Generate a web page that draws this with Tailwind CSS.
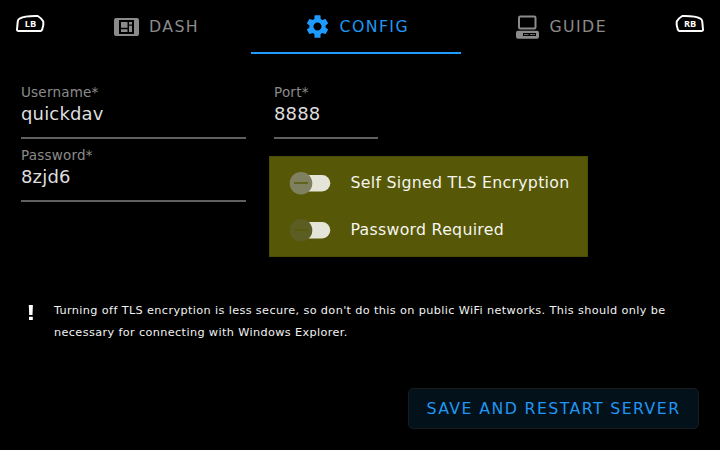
<!DOCTYPE html>
<html lang="en">
<head>
<meta charset="utf-8">
<title>Config</title>
<script src="https://cdn.jsdelivr.net/npm/@tailwindcss/browser@4"></script>
</head>
<body class="bg-black">
<div class="w-[720px] h-[450px] overflow-hidden bg-black text-white font-['DejaVu_Sans',sans-serif] flex flex-col">
  <header class="flex h-[54px] shrink-0 pl-[15px]">
    <svg class="w-[30px] h-[20px] mt-[14px] mr-[-4px] shrink-0" viewBox="0 0 30 20" fill="none" stroke="#fff" stroke-width="2" stroke-linejoin="round"><path d="M2.8 7.2Q3 5.2 5 4.4Q9.5 1.7 22.8 2Q26 3.8 28.3 7.6Q28.9 10.5 27.2 15.5Q26.5 17 25.5 17H3.5Q1.9 17 2 15.5Z"/><text x="9.7" y="12.8" fill="#fff" stroke="none" font-family="Open Sans, sans-serif" font-weight="700" font-size="9.4" textLength="11.4" lengthAdjust="spacingAndGlyphs">LB</text></svg>
    <nav class="grid grid-cols-[210px_210px_210px] text-[15.75px] leading-[20px] tracking-[0.0893em]">
      <div class="flex items-center pl-[73px] text-[#8b8b8b]">
        <svg class="w-[25px] h-[18px] mr-[10px]" viewBox="0 0 25 18"><path fill="#8b8b8b" fill-rule="evenodd" d="M2 0H23Q25 0 25 2V16Q25 18 23 18H2Q0 18 0 16V2Q0 0 2 0ZM5 2V16H20V2Z"/><path fill="#8b8b8b" d="M7 4H13.5V9.7H7ZM15 4H18V6.4H15ZM15 7.7H18V14H15ZM7 11.3H13.5V14H7Z"/></svg>
        <span>DASH</span>
      </div>
      <div class="flex items-center pt-[2px] pl-[53px] text-[#2196f3] border-b-2 border-[#1e9bff]">
        <svg class="w-[27px] h-[27px] mr-[8.5px] mb-[1px]" viewBox="0 0 24 24" fill="#1e9bff"><path d="M19.14 12.94c.04-.3.06-.61.06-.94 0-.32-.02-.64-.07-.94l2.03-1.58c.18-.14.23-.41.12-.61l-1.92-3.32c-.12-.22-.37-.29-.59-.22l-2.39.96c-.5-.38-1.03-.7-1.62-.94L14.7 2.3c-.04-.24-.24-.41-.48-.41h-4.44c-.24 0-.43.17-.47.41L9.25 5.35c-.59.24-1.13.57-1.62.94l-2.39-.96c-.22-.08-.47 0-.59.22L2.74 8.87c-.12.21-.08.47.12.61l2.03 1.58c-.05.3-.09.63-.09.94s.02.64.07.94l-2.03 1.58c-.18.14-.23.41-.12.61l1.92 3.32c.12.22.37.29.59.22l2.39-.96c.5.38 1.03.7 1.62.94l.06 3.05c.05.24.24.41.48.41h4.44c.24 0 .44-.17.47-.41l.06-3.05c.59-.24 1.13-.56 1.62-.94l2.39.96c.22.08.47 0 .59-.22l1.92-3.32c.12-.22.07-.47-.12-.61zM12 15.6c-1.98 0-3.6-1.62-3.6-3.6s1.62-3.6 3.6-3.6 3.6 1.62 3.6 3.6-1.62 3.6-3.6 3.6z"/></svg>
        <span>CONFIG</span>
      </div>
      <div class="flex items-center pl-[55px] text-[#8b8b8b]">
        <svg class="w-[23px] h-[24px] mr-[10.5px]" viewBox="0 0 23 24"><rect x="3" y="1.5" width="16.5" height="12" rx="1.2" fill="none" stroke="#8b8b8b" stroke-width="2"/><path fill="#8b8b8b" fill-rule="evenodd" d="M2 15.7H21Q23 15.7 23 17.7V21.5Q23 23.7 21 23.7H2Q0 23.7 0 21.5V17.7Q0 15.7 2 15.7ZM7 18V21H20V18ZM8 19.2H12.5V20H8ZM14 19.2H19V20H14Z"/></svg>
        <span>GUIDE</span>
      </div>
    </nav>
    <svg class="w-[30px] h-[20px] mt-[14px] ml-[4px] shrink-0" viewBox="0 0 30 20" fill="none" stroke="#fff" stroke-width="2" stroke-linejoin="round"><path d="M27.2 7.2Q27 5.2 25 4.4Q20.5 1.7 7.2 2Q4 3.8 1.7 7.6Q1.1 10.5 2.8 15.5Q3.5 17 4.5 17H26.5Q28.1 17 28 15.5Z"/><text x="9" y="12.8" fill="#fff" stroke="none" font-family="Open Sans, sans-serif" font-weight="700" font-size="9.4" textLength="12.2" lengthAdjust="spacingAndGlyphs">RB</text></svg>
  </header>

  <main class="flex px-[21px] pt-[30px] h-[203px] shrink-0">
    <div class="w-[225px] shrink-0">
      <label class="flex flex-col h-[55px] mb-[8px] border-b-2 border-[#606060]">
        <span class="text-[13.5px] leading-[17px] tracking-[0.22px] text-[#8b8b8b]">Username*</span>
        <span class="text-[18px] leading-[26px] tracking-[0.17px] text-[#dedede]">quickdav</span>
      </label>
      <label class="flex flex-col h-[55px] border-b-2 border-[#606060]">
        <span class="text-[13.5px] leading-[17px] tracking-[0.22px] text-[#8b8b8b]">Password*</span>
        <span class="text-[18px] leading-[26px] tracking-[0.17px] text-[#dedede]">8zjd6</span>
      </label>
    </div>
    <div class="ml-[23px]">
      <label class="flex flex-col w-[104px] h-[55px] ml-[5px] mb-[17px] border-b-2 border-[#606060]">
        <span class="text-[13.5px] leading-[17px] tracking-[0.22px] text-[#8b8b8b]">Port*</span>
        <span class="text-[18px] leading-[26px] tracking-[0.17px] text-[#dedede]">8888</span>
      </label>
      <div class="w-[319px] h-[101px] bg-[#565807] border border-[#4b4d06] pl-[19px] pt-[2px] text-[15.75px] text-[#f5f5ee]">
        <div class="flex items-center h-[47px]">
          <svg class="w-[42px] h-[24px] mr-[19.5px]" viewBox="0 0 42 24"><rect x="8" y="4" width="33.3" height="16.4" rx="8.2" fill="#e4e5d8"/><circle cx="12" cy="12.3" r="11.3" fill="#7f8060"/><path d="M5 12H19" stroke="#565807" stroke-width="1.5"/></svg>
          <span class="tracking-[0.0179em] pt-[1px]">Self Signed TLS Encryption</span>
        </div>
        <div class="flex items-center h-[47px]">
          <svg class="w-[42px] h-[24px] mr-[19.5px]" viewBox="0 0 42 24"><rect x="8" y="4" width="33.3" height="16.4" rx="8.2" fill="#e4e5d8"/><circle cx="12" cy="12.3" r="11.3" fill="#5c5d23"/><path d="M5 12H19" stroke="#565807" stroke-width="1.5"/></svg>
          <span class="tracking-[0.0179em] pt-[1px]">Password Required</span>
        </div>
      </div>
    </div>
  </main>

  <section class="flex mt-[42px] pl-[28px] shrink-0">
    <svg class="w-[6px] h-[16px] mt-[6px] mr-[20px]" viewBox="0 0 6 16" fill="#fff"><path d="M.8 0H4.9L4.5 10H1.2ZM1 11.8H4.8V15H1Z"/></svg>
    <p class="pt-[0.5px] text-[11.25px] leading-[22.5px] tracking-[0.0333em] whitespace-nowrap text-[#f2f2f2]">Turning off TLS encryption is less secure, so don't do this on public WiFi networks. This should only be<br>necessary for connecting with Windows Explorer.</p>
  </section>

  <div class="flex justify-end mt-[43.5px] pr-[21px]">
    <button class="w-[291px] h-[41px] rounded-[5px] border border-[#171c20] bg-[#02111a] text-[#2196f3] text-[15.75px] tracking-[0.0893em] whitespace-nowrap">SAVE AND RESTART SERVER</button>
  </div>
</div>
</body>
</html>
